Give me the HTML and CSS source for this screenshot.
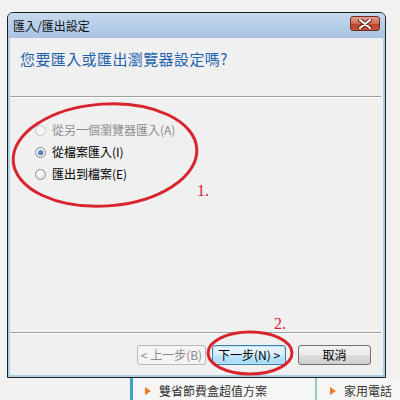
FILE: index.html
```html
<!DOCTYPE html>
<html lang="zh-Hant">
<head>
  <meta charset="UTF-8" />
  <title>匯入/匯出設定</title>
  <link rel="stylesheet" href="styles.css">
</head>
<body>
  <div class="window">
    <div class="titlebar">
      <span class="title">匯入/匯出設定</span>
      <span class="close">
        <svg width="14" height="10" viewBox="0 0 14 10">
          <path d="M2 1 L12 9 M12 1 L2 9" stroke="#5a1a12" stroke-width="4" stroke-linecap="round"/>
          <path d="M2 1 L12 9 M12 1 L2 9" stroke="#ffffff" stroke-width="2.2" stroke-linecap="round"/>
        </svg>
      </span>
    </div>
    <div class="frame">
      <div class="body">
        <div class="instruction">您要匯入或匯出瀏覽器設定嗎?</div>
        <div class="sep"></div>
        <div class="options">
          <div class="option disabled"><span class="radio"></span>從另一個瀏覽器匯入(A)</div>
          <div class="option"><span class="radio checked"></span>從檔案匯入(I)</div>
          <div class="option"><span class="radio"></span>匯出到檔案(E)</div>
        </div>
        <div class="sep"></div>
        <div class="buttons">
          <button class="btn back" disabled>&lt; 上一步(B)</button>
          <button class="btn next">下一步(N) &gt;</button>
          <button class="btn cancel">取消</button>
        </div>
      </div>
    </div>
  </div>

  <div class="strip">
    <div class="link first"><span class="arrow"></span>雙省節費盒超值方案</div>
    <div class="link second"><span class="arrow"></span>家用電話</div>
  </div>

  <!-- hand-drawn annotations over the dialog -->
  <svg class="marks" width="400" height="400" viewBox="0 0 400 400">
    <ellipse cx="105" cy="155" rx="92" ry="51" transform="rotate(-4 105 155)" fill="none" stroke="#d8242c" stroke-width="3"/>
    <ellipse cx="250" cy="353" rx="42" ry="21" fill="none" stroke="#d8242c" stroke-width="3"/>
    <text x="197" y="196" class="num">1.</text>
    <text x="274" y="329" class="num">2.</text>
  </svg>
</body>
</html>
```

FILE: styles.css
```css
body {
  margin: 0;
  background: #f1f1f1;
  font-family: "Noto Sans CJK TC", "Liberation Sans", sans-serif;
  font-size: 12px;
  color: #000;
  width: 400px;
  height: 400px;
  position: relative;
  overflow: hidden;
}

.window {
  box-sizing: border-box;
  width: 379px;
  height: 366px;
  margin: 12px 0 0 7px;
  border: 1px solid #1e1e1e;
  border-radius: 6px 6px 0 0;
  background: #a9d2ea;
  display: flex;
  flex-direction: column;
}

.titlebar {
  height: 25px;
  display: flex;
  align-items: center;
  justify-content: space-between;
  padding: 0 5px 0 5px;
  border-radius: 5px 5px 0 0;
  background: linear-gradient(#c6d9ed, #a8c3e2);
}

.title {
  line-height: 14px;
  color: #111;
}

.close {
  width: 30px;
  height: 15px;
  margin-top: -4px;
  box-sizing: border-box;
  border: 1px solid #6e2a20;
  border-radius: 3px;
  background: linear-gradient(#e3a092, #cf6a56 50%, #b8412c 51%, #c9553f);
  display: flex;
  align-items: center;
  justify-content: center;
}

.frame {
  flex: 1;
  padding: 0 2px 2px 2px;
  display: flex;
}

.body {
  flex: 1;
  background: #f0f0f0;
  display: flex;
  flex-direction: column;
}

.instruction {
  height: 58px;
  box-sizing: border-box;
  padding: 11px 0 0 10px;
  font-size: 15px;
  letter-spacing: 0.4px;
  line-height: 20px;
  color: #1f62ad;
}

.sep {
  height: 1px;
  margin-right: 2px;
  background: #a0a0a0;
  border-bottom: 1px solid #ffffff;
}

.options {
  flex: 1;
  padding: 21px 0 0 25px;
}

.option {
  height: 22px;
  display: flex;
  align-items: center;
  line-height: 14px;
}

.option.disabled {
  color: #8d8d8d;
}

.radio {
  width: 11px;
  height: 11px;
  box-sizing: border-box;
  border: 1px solid #8a8f95;
  border-radius: 50%;
  background: radial-gradient(circle at 40% 40%, #ffffff, #d6d8dc);
  margin-right: 6px;
  display: flex;
  align-items: center;
  justify-content: center;
}

.disabled .radio {
  border-color: #c4c6c8;
  background: #f4f4f4;
}

.radio.checked::after {
  content: "";
  width: 5px;
  height: 5px;
  border-radius: 50%;
  background: radial-gradient(circle at 35% 35%, #6ea8e0, #18408a);
}

.buttons {
  height: 41px;
  box-sizing: border-box;
  padding: 11px 12px 0 0;
  display: flex;
  justify-content: flex-end;
  align-items: flex-start;
}

.btn {
  height: 20px;
  padding: 0;
  box-sizing: border-box;
  border: 1px solid #707070;
  border-radius: 3px;
  background: linear-gradient(#f2f2f2, #ebebeb 50%, #dddddd 51%, #cfcfcf);
  font-family: inherit;
  font-size: 12px;
  line-height: 16px;
  color: #000;
}

.back {
  width: 69px;
  margin-right: 6px;
  border-color: #b5b9bd;
  background: #f4f4f4;
  color: #8a8a8a;
}

.next {
  width: 74px;
  margin-right: 12px;
  border-color: #3c7fb1;
  box-shadow: inset 0 0 0 1px #bfe4f8;
  background: linear-gradient(#eaf6fd, #d9f0fc 50%, #bee6fd 51%, #a7d9f5);
}

.cancel {
  width: 73px;
}

.strip {
  height: 22px;
  margin-left: 130px;
  display: flex;
  background: #f6f6f6;
}

.link {
  display: flex;
  align-items: center;
  padding-top: 3px;
  color: #333;
  font-size: 12px;
  white-space: nowrap;
  box-sizing: border-box;
}

.link.first {
  width: 185px;
  border-left: 3px solid #3aa5c3;
  padding-left: 12px;
}

.link.second {
  flex: 1;
  border-left: 2px solid #8fd0b0;
  padding-left: 13px;
}

.arrow {
  width: 0;
  height: 0;
  border-top: 4px solid transparent;
  border-bottom: 4px solid transparent;
  border-left: 6px solid #f07a26;
  margin-right: 8px;
}

.marks {
  position: absolute;
  left: 0;
  top: 0;
  pointer-events: none;
}

.num {
  font-family: "Liberation Serif", serif;
  font-size: 16px;
  fill: #d8242c;
}
```
